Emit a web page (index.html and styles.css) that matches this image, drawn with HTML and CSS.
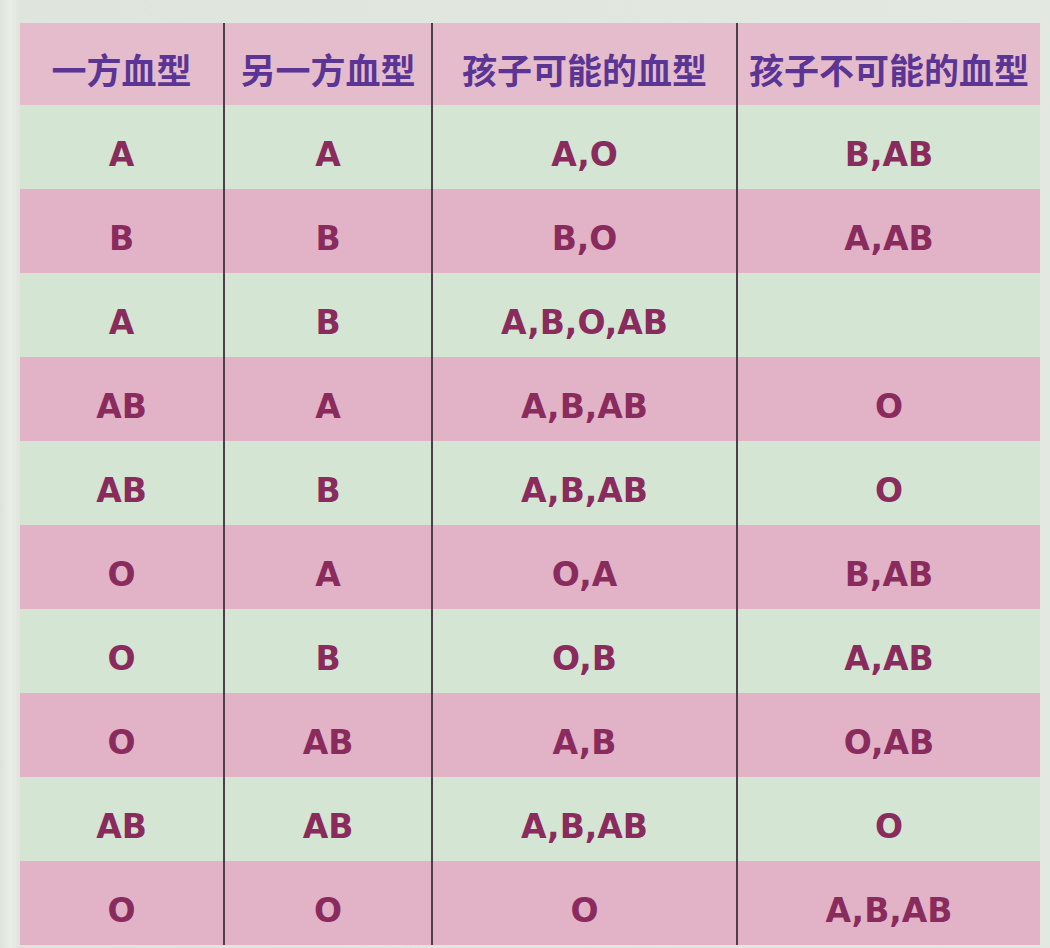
FILE: index.html
```html
<!DOCTYPE html>
<html lang="zh-CN">
<head>
<meta charset="utf-8">
<title>血型遗传表</title>
<link rel="stylesheet" href="styles.css">
</head>
<body>
<div class="page">
<table class="blood">
  <colgroup>
    <col class="c1"><col class="c2"><col class="c3"><col class="c4">
  </colgroup>
  <thead>
    <tr class="pink head">
      <th>一方血型</th><th>另一方血型</th><th>孩子可能的血型</th><th>孩子不可能的血型</th>
    </tr>
  </thead>
  <tbody>
    <tr class="green"><td>A</td><td>A</td><td>A,O</td><td>B,AB</td></tr>
    <tr class="pink"><td>B</td><td>B</td><td>B,O</td><td>A,AB</td></tr>
    <tr class="green"><td>A</td><td>B</td><td>A,B,O,AB</td><td></td></tr>
    <tr class="pink"><td>AB</td><td>A</td><td>A,B,AB</td><td>O</td></tr>
    <tr class="green"><td>AB</td><td>B</td><td>A,B,AB</td><td>O</td></tr>
    <tr class="pink"><td>O</td><td>A</td><td>O,A</td><td>B,AB</td></tr>
    <tr class="green"><td>O</td><td>B</td><td>O,B</td><td>A,AB</td></tr>
    <tr class="pink"><td>O</td><td>AB</td><td>A,B</td><td>O,AB</td></tr>
    <tr class="green"><td>AB</td><td>AB</td><td>A,B,AB</td><td>O</td></tr>
    <tr class="pink"><td>O</td><td>O</td><td>O</td><td>A,B,AB</td></tr>
  </tbody>
</table>
</div>
</body>
</html>
```

FILE: styles.css
```css
html, body {
  margin: 0;
  padding: 0;
}
body {
  width: 1050px;
  height: 948px;
  overflow: hidden;
  background: linear-gradient(90deg, #dde3da 0px, #e9eee6 10px, #dfe5dc 20px, #e3e8e0 100%);
  font-family: "DejaVu Sans", "Noto Sans CJK SC", sans-serif;
}
.page {
  padding: 23px 10px 0 20px;
}
.blood {
  border-collapse: collapse;
  table-layout: fixed;
  width: 1020px;
}
.c1 { width: 204px; }
.c2 { width: 208px; }
.c3 { width: 305px; }
.c4 { width: 303px; }

.blood th, .blood td {
  padding: 0;
  text-align: center;
  border-right: 2px solid #4d3f47;
}
.blood th:last-child, .blood td:last-child {
  border-right: none;
}
.blood th {
  height: 82px;
  padding-top: 8px;
  box-sizing: border-box;
  font-family: "Noto Sans CJK SC", "DejaVu Sans", sans-serif;
  font-weight: 700;
  font-size: 35px;
  color: #5b3593;
  white-space: nowrap;
}
.blood td {
  height: 84px;
  padding-top: 15px;
  box-sizing: border-box;
  font-weight: 700;
  font-size: 33px;
  color: #8a2b5e;
}
.pink { background: #e2b3c7; }
.head { background: #e5bccc; }
.green { background: #d5e5d4; }
```
